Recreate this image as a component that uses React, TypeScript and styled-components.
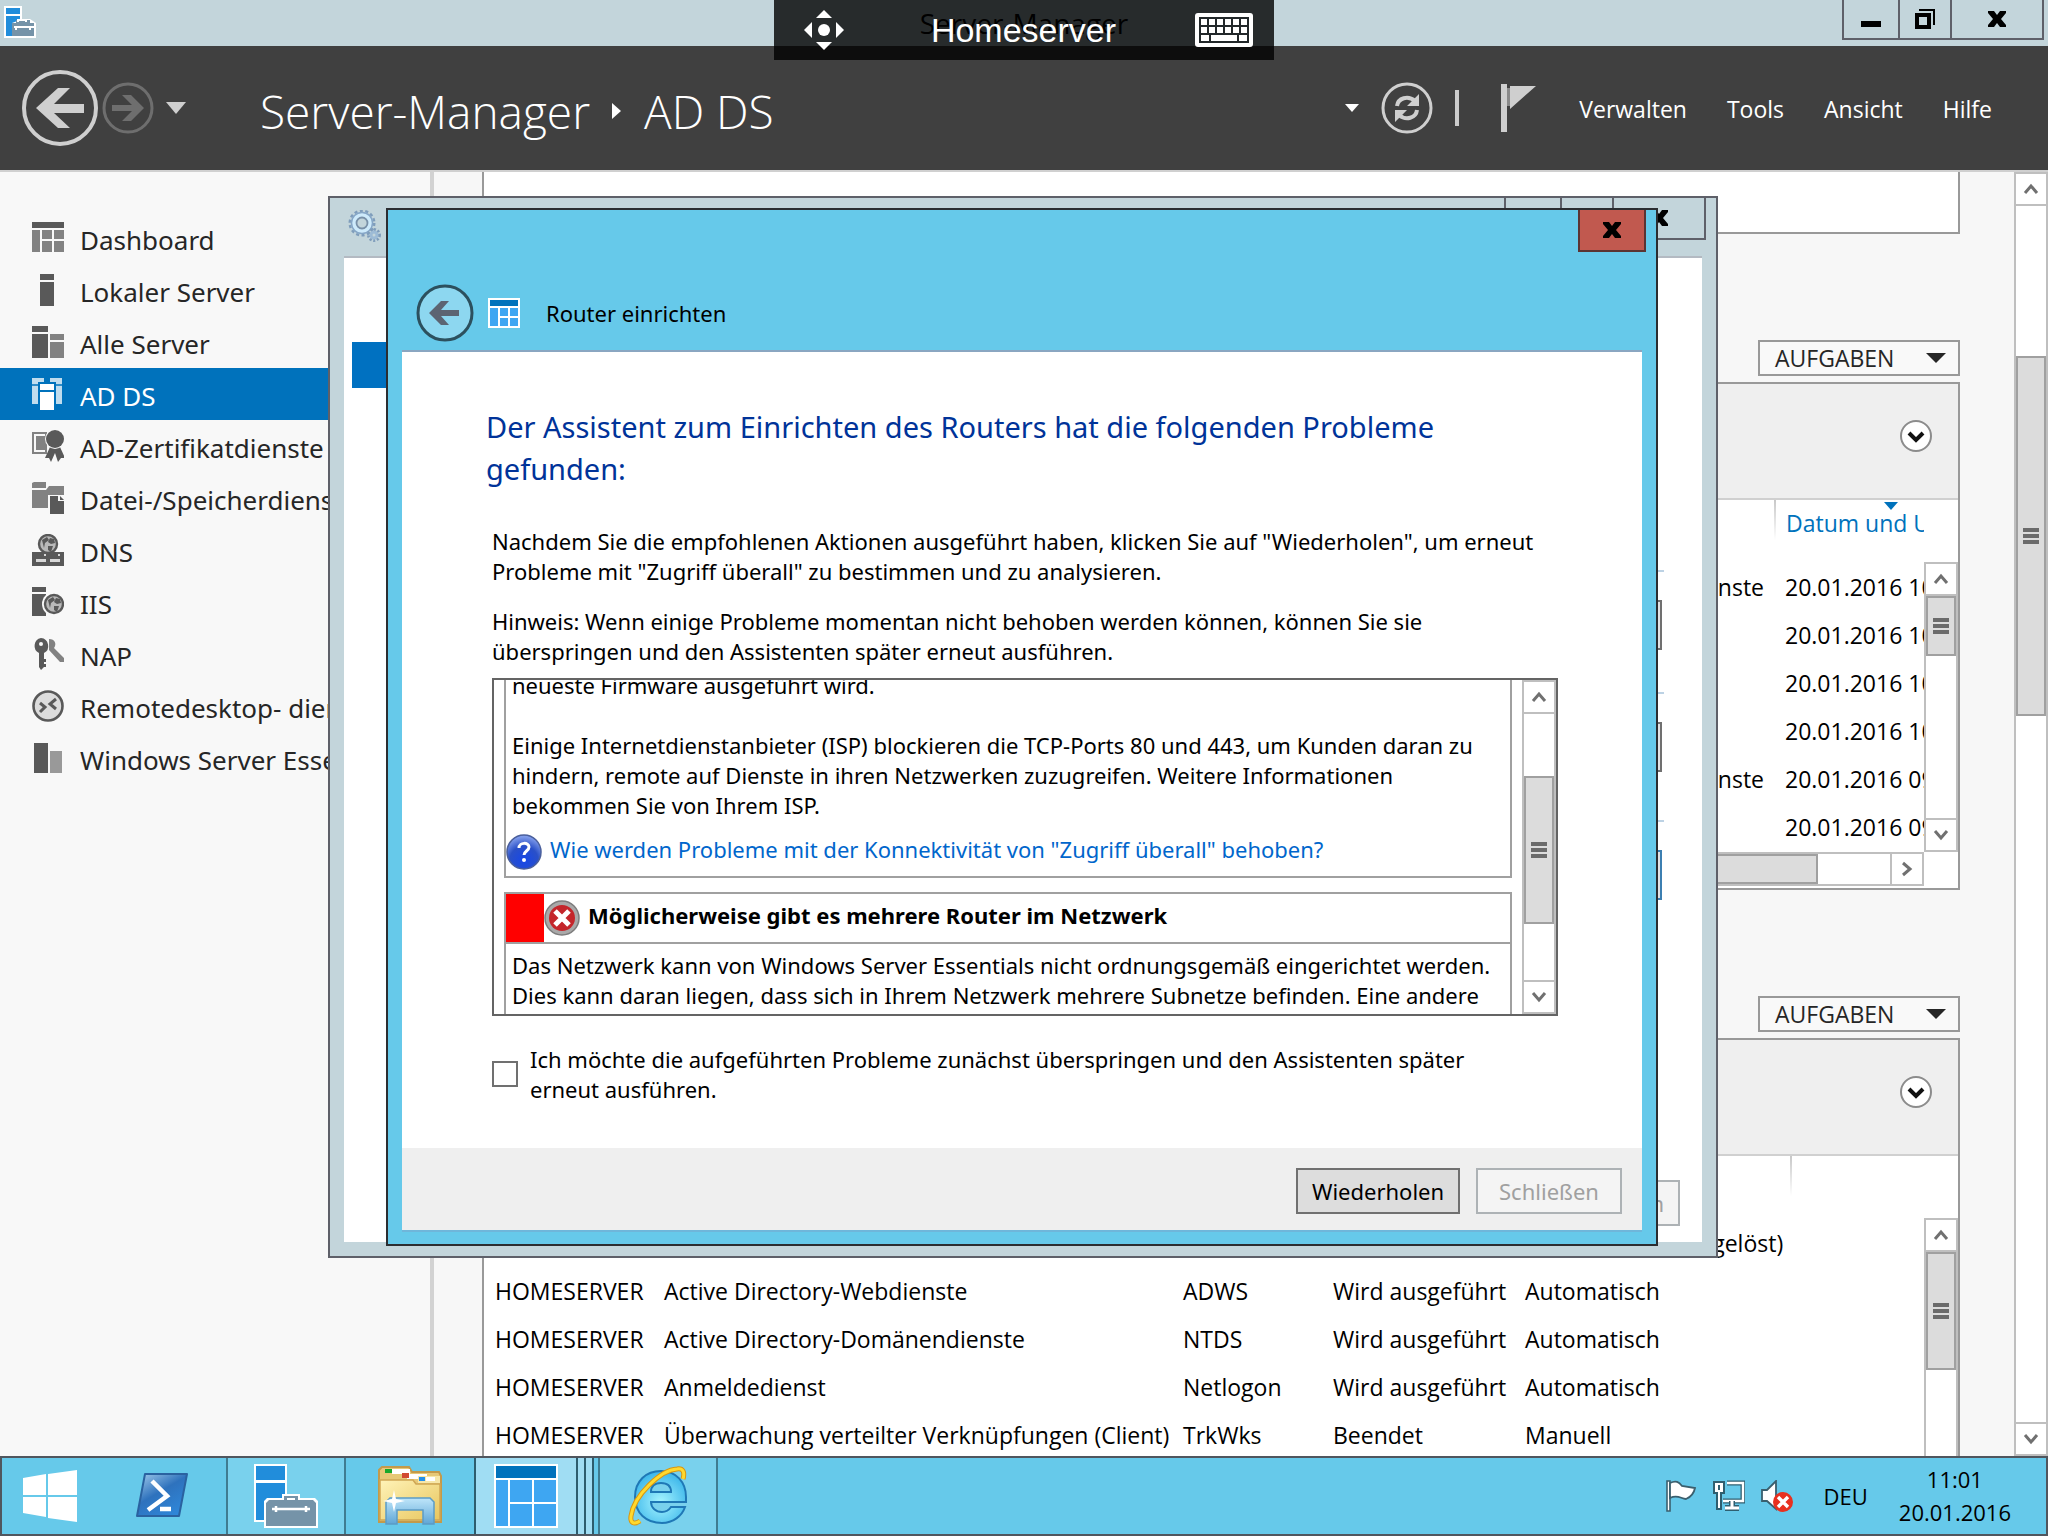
import React from "react";
import styled, { createGlobalStyle, css } from "styled-components";

const ui = '"Open Sans", "Noto Sans", sans-serif';
const wide = '"Noto Sans", "Open Sans", sans-serif';

const color = {
  accent: "#66c9ea",
  inactive: "#c3d5db",
  select: "#0072bc",
  line: "#999999",
  track: "#bfbfbf",
  page: "#f7f7f7",
  thumb: "#dcdcdc",
};

const GlobalStyle = createGlobalStyle`
  *, *::before, *::after { box-sizing: border-box; }
  body { margin: 0; overflow: hidden; font-family: ${ui}; font-size: 22px; line-height: 30px; color: #000; background: #fff; }
  button { font: inherit; color: inherit; padding: 0; border: 0; background: none; border-radius: 0; }
  svg { display: block; flex: none; }
  p, h1, h2, h3, ul { margin: 0; padding: 0; font-weight: 400; }
  a { text-decoration: none; color: inherit; }
`;

/* ---------- desktop ---------- */

const Desktop = styled.div`
  position: relative;
  display: flex;
  flex-direction: column;
  width: 100%;
  height: 100vh;
  overflow: hidden;
`;

const TitleBar = styled.header`
  display: grid;
  grid-template-columns: 1fr auto 1fr;
  height: 46px;
  flex: none;
  padding: 0 4px;
  background: ${color.inactive};
`;

const TitleIcon = styled.span`
  padding-top: 6px;
`;

const TitleText = styled.h1`
  font-size: 28px;
  line-height: 46px;
`;

const CaptionGroup = styled.div<{ $height: number }>`
  display: flex;
  justify-self: end;
  height: ${(p) => p.$height}px;
  border: 2px solid #5e6069;
  border-top: 0;
  border-right: 0;
`;

const CaptionButton = styled.button<{ $width: number }>`
  display: flex;
  align-items: center;
  justify-content: center;
  width: ${(p) => p.$width}px;
  border-right: 2px solid #5e6069;
`;

const ConnectionBar = styled.div`
  position: absolute;
  z-index: 5;
  top: 0;
  left: 50%;
  width: 500px;
  height: 60px;
  margin-left: -250px;
  padding: 0 21px 0 30px;
  display: grid;
  grid-template-columns: 48px 1fr 58px;
  align-items: center;
  background: rgba(0, 0, 0, 0.8);
  color: #fff;
  font-family: "Liberation Sans", Arial, sans-serif;
  font-size: 34px;
  line-height: 40px;
  text-align: center;
`;

const BarButton = styled.button`
  display: flex;
`;

/* ---------- server manager header ---------- */

const Header = styled.div`
  display: flex;
  align-items: center;
  flex: none;
  height: 126px;
  padding: 0 56px 0 22px;
  background: #404040;
  border-bottom: 2px solid #d0d0d0;
  color: #fff;
`;

const History = styled.div`
  display: flex;
  align-items: center;
  gap: 4px;
`;

const RoundButton = styled.button`
  display: flex;
`;

const HistoryMenu = styled.button`
  padding: 0 8px;
`;

const Breadcrumb = styled.nav`
  display: flex;
  align-items: center;
  gap: 22px;
  margin-left: 66px;
  padding-top: 6px;
  font-size: 46px;
  font-weight: 300;
  line-height: 60px;
`;

const Commands = styled.div`
  display: flex;
  align-items: center;
  margin-left: auto;
`;

const Refresh = styled.div`
  display: flex;
  align-items: center;
  gap: 22px;
`;

const CommandRule = styled.span`
  width: 4px;
  height: 36px;
  background: #cccccc;
`;

const FlagButton = styled.button`
  margin: 0 42px;
`;

const MenuBar = styled.nav`
  display: flex;
  gap: 40px;
  padding-top: 2px;
  font-size: 23px;
`;

/* ---------- server manager body ---------- */

const Body = styled.div`
  display: flex;
  flex: 1;
  min-height: 0;
  background: ${color.page};
`;

const Sidebar = styled.nav`
  flex: none;
  width: 434px;
  padding-top: 40px;
  border-right: 4px solid #d2d2d2;
  overflow: hidden;
  background: #f8f8f8;
  font-family: ${wide};
`;

const SideItem = styled.a<{ $active?: boolean }>`
  display: flex;
  align-items: center;
  gap: 16px;
  height: 52px;
  padding-left: 32px;
  font-size: 26px;
  white-space: nowrap;
  color: ${(p) => (p.$active ? "#fff" : "#262626")};
  background: ${(p) => (p.$active ? color.select : "transparent")};
`;

const SideLabel = styled.span`
  padding-top: 3px;
`;

const Content = styled.main`
  flex: 1;
  min-width: 0;
  overflow: hidden;
  padding: 0 54px 0 48px;
  font-size: 23px;
`;

const TopTile = styled.section`
  height: 62px;
  border: 2px solid ${color.line};
  border-top: 0;
  background: #fff;
`;

const TileActions = styled.div`
  display: flex;
  justify-content: flex-end;
  padding: 106px 0 6px;
`;

const TaskButton = styled.button`
  display: flex;
  align-items: center;
  justify-content: space-between;
  width: 202px;
  height: 36px;
  padding: 0 12px 0 15px;
  border: 2px solid ${color.line};
  background: #f9f9f9;
  color: #262626;
`;

const Tile = styled.section`
  padding-bottom: 2px;
  border: 2px solid ${color.line};
  background: #fff;
`;

const TileFilter = styled.div`
  display: flex;
  justify-content: flex-end;
  align-items: center;
  height: 116px;
  padding: 0 26px 10px;
  background: #efefef;
  border-bottom: 2px solid #d0d0d0;
`;

const TileBody = styled.div`
  display: flex;
`;

const TableClip = styled.div`
  flex: 1;
  min-width: 0;
  overflow: hidden;
`;

const TileScroll = styled.div<{ $corner?: boolean }>`
  display: flex;
  flex: none;
  padding: 62px 0 ${(p) => (p.$corner ? 34 : 0)}px;
`;

const Table = styled.table`
  width: 100%;
  table-layout: fixed;
  border-collapse: collapse;
  white-space: nowrap;
`;

const HeadCell = styled.th<{ $rule?: boolean }>`
  height: 64px;
  padding: 8px 0 0 12px;
  font-weight: 400;
  text-align: left;
  vertical-align: top;
  color: ${color.select};
  ${(p) =>
    p.$rule &&
    css`
      background: linear-gradient(#c8c8c8, #fff) no-repeat 0 0 / 2px 40px;
    `}
`;

const SortMark = styled.span`
  display: block;
  height: 8px;
  margin: -6px 0 -2px 98px;
`;

const Cell = styled.td<{ $align?: "left" | "right" }>`
  height: 48px;
  padding: 0 10px 3px 11px;
  text-align: ${(p) => p.$align ?? "left"};
`;

/* ---------- scroll bars ---------- */

const Scroll = styled.div<{ $horizontal?: boolean }>`
  display: flex;
  flex: none;
  flex-direction: ${(p) => (p.$horizontal ? "row" : "column")};
  ${(p) => (p.$horizontal ? "height: 34px;" : "width: 34px;")}
  background: #fff;
  border: solid ${color.track};
  border-width: ${(p) => (p.$horizontal ? "2px 0" : "0 2px")};
`;

const ScrollButton = styled.button`
  display: flex;
  align-items: center;
  justify-content: center;
  flex: none;
  width: 30px;
  height: 34px;
  border: solid ${color.track};
  border-width: 2px 0;
`;

const ScrollButtonSide = styled(ScrollButton)`
  width: 34px;
  height: 30px;
  border-width: 0 2px;
`;

const ScrollGap = styled.span<{ $size?: number }>`
  flex: ${(p) => (p.$size === undefined ? "1" : `0 0 ${p.$size}px`)};
`;

const Thumb = styled.span<{ $size: number }>`
  display: flex;
  align-items: center;
  justify-content: center;
  flex: 0 0 ${(p) => p.$size}px;
  background: ${color.thumb};
  border: 2px solid #a0a0a0;
`;

/* ---------- windows ---------- */

const BackWindow = styled.section`
  position: absolute;
  left: 328px;
  top: 196px;
  width: 1390px;
  height: 1062px;
  display: flex;
  flex-direction: column;
  padding: 0 14px 14px;
  border: 2px solid #5e6069;
  background: ${color.inactive};
  font-family: ${wide};
`;

const BackTitle = styled.header`
  display: flex;
  justify-content: space-between;
  height: 58px;
  flex: none;
  padding-left: 4px;

  > svg {
    margin-top: 12px;
  }
`;

const BackCaption = styled.div`
  margin-right: -4px;
`;

const BackClient = styled.div`
  display: flex;
  flex: 1;
  padding: 84px 22px 16px 8px;
  background: #fff;
  border-top: 2px solid #b3bac2;
`;

const BackNav = styled.div`
  width: 300px;
  height: 46px;
  background: #0071c1;
`;

const BackSteps = styled.div`
  display: flex;
  flex: 1;
  flex-direction: column;
  align-items: flex-end;
  padding-top: 228px;
`;

const Step = styled.div<{ $gap: number }>`
  display: flex;
  justify-content: flex-end;
  width: 400px;
  margin-right: 16px;
  padding: 28px 2px ${(p) => p.$gap}px;
  border-top: 2px solid #bcd2e4;
`;

const StepButton = styled.button<{ $focus?: boolean }>`
  width: 180px;
  height: 50px;
  border: 2px solid ${(p) => (p.$focus ? "#3c7fb1" : "#707070")};
  background: #e3e3e3;
`;

const Dialog = styled.section`
  position: absolute;
  z-index: 2;
  left: 386px;
  top: 208px;
  width: 1272px;
  padding: 0 14px 12px;
  border: 2px solid #2b2d31;
  background: ${color.accent};
  font-family: ${wide};
`;

const DialogBar = styled.header`
  display: flex;
  justify-content: flex-end;
  height: 42px;
  margin-right: -4px;
`;

const CloseButton = styled.button`
  display: flex;
  align-items: center;
  justify-content: center;
  width: 68px;
  border: 2px solid #5b3433;
  border-top: 0;
  background: #c1594f;
`;

const DialogCaption = styled.div`
  display: flex;
  align-items: center;
  gap: 14px;
  padding: 32px 14px 8px;
`;

const DialogTitle = styled.h2`
  font-size: 22px;
  line-height: 30px;
  padding-left: 12px;
`;

const DialogClient = styled.div`
  background: #fff;
  border-top: 2px solid #8aa6c1;
  border-bottom: 2px solid #6fb6da;
`;

const Headline = styled.h3`
  padding: 54px 84px 36px;
  font-size: 29px;
  line-height: 42px;
  color: #003399;
  white-space: nowrap;
`;

const DialogText = styled.div`
  display: flex;
  flex-direction: column;
  gap: 20px;
  padding: 0 84px 12px 90px;
  white-space: nowrap;
`;

const ProblemBox = styled.div`
  display: flex;
  height: 338px;
  margin: 0 84px 0 90px;
  border: 2px solid #646464;
`;

const ProblemList = styled.div`
  flex: 1;
  min-width: 0;
  overflow: hidden;
  padding: 0 10px;
`;

const ScrolledContent = styled.div`
  display: flex;
  flex-direction: column;
  gap: 14px;
  margin-top: -10px;
`;

const Problem = styled.article`
  border: 2px solid #a0a0a0;
  white-space: nowrap;
`;

const OpenProblem = styled(Problem)`
  border-top: 0;
`;

const ProblemHead = styled.div`
  display: flex;
  height: 50px;
  border-bottom: 2px solid #a0a0a0;

  > svg {
    margin: 6px 8px 0 0;
  }
`;

const Severity = styled.span`
  width: 38px;
  background: #ff0000;
`;

const ProblemTitle = styled.strong`
  line-height: 42px;
  font-weight: 700;
`;

const ProblemText = styled.p`
  padding: 0 6px;
`;

const ProblemDetail = styled(ProblemText)`
  padding-top: 6px;
`;

const HelpLink = styled.a`
  display: flex;
  gap: 8px;
  margin-top: 14px;
  padding-bottom: 6px;
  line-height: 30px;
  color: #0066cc;
`;

const SkipRow = styled.div`
  display: flex;
  align-items: center;
  gap: 12px;
  padding: 28px 84px 44px 90px;
  white-space: nowrap;
`;

const CheckBox = styled.input`
  appearance: none;
  flex: none;
  width: 26px;
  height: 26px;
  margin: 0;
  border: 2px solid #707070;
  background: #fff;
`;

const DialogFooter = styled.footer`
  display: flex;
  justify-content: flex-end;
  gap: 16px;
  padding: 20px 20px 16px;
  background: #efefef;
`;

const PushButton = styled.button<{ $width: number }>`
  width: ${(p) => p.$width}px;
  height: 46px;
  border: 2px solid #707070;
  background: #dddddd;

  &:disabled {
    border-color: #adb2b5;
    background: #f4f4f4;
    color: #a0a0a0;
  }
`;

const BackPushButton = styled(PushButton)`
  margin-top: auto;
  padding-right: 14px;
  text-align: right;
`;

/* ---------- task bar ---------- */

const TaskBar = styled.footer`
  display: flex;
  align-items: stretch;
  flex: none;
  gap: 4px;
  height: 80px;
  border: 2px solid #50565e;
  background: ${color.accent};
`;

const TaskItem = styled.button<{ $state?: "open" | "active"; $width?: number }>`
  display: flex;
  align-items: center;
  justify-content: center;
  width: ${(p) => p.$width ?? 120}px;
  ${(p) =>
    p.$state === "open" &&
    css`
      background: #79d1ed;
      border: solid #3f7c91;
      border-width: 0 2px;
    `}
  ${(p) =>
    p.$state === "active" &&
    css`
      justify-content: flex-start;
      padding-left: 18px;
      background: #a0ddf3;
      border: solid #2d5d6e;
      border-width: 0 2px;
    `}
`;

const StackEdge = styled.span`
  align-self: stretch;
  width: 10px;
  margin-left: 18px;
  border: solid #2d5d6e;
  border-width: 0 2px;
`;

const Tray = styled.div`
  display: flex;
  align-items: center;
  gap: 16px;
  margin-left: auto;
  padding-right: 35px;
`;

const Language = styled.button`
  padding: 0 15px;
`;

const Clock = styled.div`
  text-align: center;
  line-height: 33px;
`;

/* ---------- icons ---------- */

const ManagerIcon = () => (
  <svg width="64" height="64" viewBox="0 0 64 64">
    <path d="M0 0h33v58H0z" fill="#fff" />
    <path d="M2 2h29v14H2zM2 19h29v37H2z" fill="#218ddb" />
    <path d="M10 37l3-3h15v-4h18v4h15l3 3v27H10z" fill="#fff" />
    <path d="M30 36v-4h14v4h-3v-2h-8v2zM12 39l3-3h44l3 3v23H12z" fill="#7593a8" />
    <path d="M18 45h38M22 42v6M52 42v6" stroke="#fff" strokeWidth="2.5" fill="none" />
  </svg>
);

const SmallManagerIcon = () => (
  <svg width="32" height="32" viewBox="0 0 32 32">
    <path d="M0 0h18v13h8l6 4v15H0z" fill="#fff" />
    <path d="M2 2h14v6H2zM2 10h14v4l-8 3v13H2z" fill="#218ddb" />
    <path d="M8 17h4v-3h14v3h4v13H8z" fill="#7593a8" />
    <path d="M10 21h20M12 20v4M26 20v4M14 16v-2h8v2" stroke="#fff" strokeWidth="2" fill="none" />
  </svg>
);

const XMark = () => (
  <svg width="18" height="16" viewBox="0 0 18 16">
    <path d="M0 0h6l3 4 3-4h6v2l-5 6 5 6v2h-6l-3-4-3 4H0v-2l5-6-5-6z" fill="#000" />
  </svg>
);

const MinMark = () => (
  <svg width="20" height="24" viewBox="0 0 20 24">
    <path d="M0 14h20v6H0z" />
  </svg>
);

const RestoreMark = () => (
  <svg width="20" height="20" viewBox="0 0 20 20">
    <path d="M4 0h16v16h-2V2H4zM0 4h16v16H0zM4 8v8h8V8z" fillRule="evenodd" />
  </svg>
);

const Caption = ({ height }: { height: number }) => (
  <CaptionGroup $height={height}>
    <CaptionButton $width={56} aria-label="Minimieren"><MinMark /></CaptionButton>
    <CaptionButton $width={52} aria-label="Wiederherstellen"><RestoreMark /></CaptionButton>
    <CaptionButton $width={92} aria-label="Fenster schließen"><XMark /></CaptionButton>
  </CaptionGroup>
);

const MoveIcon = () => (
  <svg width="40" height="40" viewBox="0 0 40 40" fill="#fff">
    <circle cx="20" cy="20" r="6" />
    <path d="M20 0l8 8H12zM20 40l-8-8h16zM0 20l8-8v16zM40 20l-8 8V12z" />
  </svg>
);

const KeyboardIcon = () => (
  <svg width="58" height="34" viewBox="0 0 58 34">
    <rect width="58" height="34" rx="3" fill="#fff" />
    <path d="M4 4h50v26H4z" fill="#22282a" />
    <path
      d="M6 6h6v6H6zM14 6h6v6h-6zM22 6h6v6h-6zM30 6h6v6h-6zM38 6h6v6h-6zM46 6h6v6h-6zM6 14h6v6H6zM14 14h6v6h-6zM22 14h6v6h-6zM30 14h6v6h-6zM38 14h6v6h-6zM46 14h6v6h-6zM6 22h8v6H6zM16 22h26v6H16zM44 22h8v6h-8z"
      fill="#fff"
    />
  </svg>
);

const BackIcon = () => (
  <svg width="76" height="76" viewBox="0 0 76 76">
    <circle cx="38" cy="38" r="36" fill="none" stroke="#cfcfcf" strokeWidth="4" />
    <path d="M14 38L36 18h12L32 34h30v9H32l16 15H36z" fill="#cfcfcf" />
  </svg>
);

const ForwardIcon = () => (
  <svg width="52" height="52" viewBox="0 0 52 52">
    <circle cx="26" cy="26" r="24" fill="none" stroke="#6e6e6e" strokeWidth="3" />
    <path d="M42 26L29 39h-9l10-10H10v-6h20L20 13h9z" fill="#6e6e6e" />
  </svg>
);

const Triangle = ({ w, h, fill }: { w: number; h: number; fill: string }) => (
  <svg width={w} height={h} viewBox="0 0 20 10" preserveAspectRatio="none">
    <path d="M0 0h20L10 10z" fill={fill} />
  </svg>
);

const CrumbArrow = () => (
  <svg width="10" height="16" viewBox="0 0 10 16">
    <path d="M0 0l9 8-9 8z" fill="#fff" />
  </svg>
);

const RefreshIcon = () => (
  <svg width="52" height="52" viewBox="0 0 52 52" fill="none" stroke="#cfcfcf">
    <circle cx="26" cy="26" r="24" strokeWidth="3" />
    <path d="M16 24c1-8 11-11 18-5M36 28c-1 8-11 11-18 5" strokeWidth="4" />
    <path d="M38 12v12H26zM14 40V28h12z" fill="#cfcfcf" stroke="none" />
  </svg>
);

const FlagIcon = () => (
  <svg width="36" height="48" viewBox="0 0 36 48">
    <path d="M0 0h6v48H0zM9 2h26L9 25z" fill="#cfcfcf" />
    <path d="M6 4h3v18H6z" fill="#8a8a8a" />
  </svg>
);

const ChevronCircle = () => (
  <svg width="32" height="32" viewBox="0 0 32 32">
    <circle cx="16" cy="16" r="15" fill="#fff" stroke="#8c8c8c" strokeWidth="2" />
    <path d="M9 13l7 7 7-7" fill="none" stroke="#111" strokeWidth="4" />
  </svg>
);

const Chevron = ({ turn }: { turn: number }) => (
  <svg width="16" height="16" viewBox="0 0 16 16">
    <path d="M2 12l6-7 6 7" fill="none" stroke="#707070" strokeWidth="3" transform={`rotate(${turn} 8 8)`} />
  </svg>
);

const Grip = () => (
  <svg width="16" height="16" viewBox="0 0 16 16">
    <path d="M0 0h16v4H0zM0 6h16v4H0zM0 12h16v4H0z" fill="#6b6b6b" />
  </svg>
);

const Dark = "#595959";
const Mid = "#828282";

const Globe = ({ x, y, r }: { x: number; y: number; r: number }) => (
  <g transform={`translate(${x} ${y}) scale(${r / 10})`}>
    <circle r="9" fill="#b9b9b9" stroke={Dark} strokeWidth="2.4" />
    <path d="M-6-4l5-3 2 3-4 3-1 5zM2-6l4 1 1 4-4 1-3-2zM0 2l5 0-2 6-3-2z" fill={Dark} />
  </g>
);

const sideIcons: Record<string, React.ReactNode> = {
  dashboard: (
    <>
      <path d="M0 0h32v6H0z" fill={Dark} />
      <path d="M0 8h8v22H0zM10 8h10v9H10zM22 8h10v9H22zM10 19h10v11H10zM22 19h10v11H22z" fill={Mid} />
    </>
  ),
  local: <path d="M8 0h14v6H8zM8 8h14v24H8z" fill={Dark} />,
  all: (
    <>
      <path d="M0 0h16v6H0zM0 8h16v24H0z" fill={Dark} />
      <path d="M18 8h14v6H18zM18 16h14v16H18z" fill={Mid} />
    </>
  ),
  adds: (
    <>
      <path d="M0 0h12v6H6v20H0zM18 0h12v26h-6V6h-6z" fill="#bfdcee" />
      <path d="M0 7h7M23 7h7" stroke={color.select} strokeWidth="1.5" />
      <path d="M6 4h18v28H6z" fill={color.select} />
      <path d="M8 6h14v6H8zM8 14h14v18H8z" fill="#fff" />
    </>
  ),
  cert: (
    <>
      <path d="M1 3h13v20H1z" fill="none" stroke={Mid} strokeWidth="2" />
      <path d="M4 6h9v14H4z" fill={Mid} />
      <path d="M18 17l-5 11 4 0 2 4 4-9 3 9 3-4h4l-5-11z" fill={Dark} />
      <circle cx="23" cy="9" r="10" fill="#f8f8f8" />
      <circle cx="23" cy="9" r="9" fill={Dark} />
    </>
  ),
  files: (
    <>
      <path d="M0 1l2-1h12v6H0zM0 8h14l3-4h15v9H16v13H0z" fill={Mid} />
      <path d="M18 14h8v5h6v13H18zM28 14l4 4h-4z" fill={Dark} />
    </>
  ),
  dns: (
    <>
      <Globe x={16} y={10} r={10} />
      <path d="M0 18h32v14H0z" fill={Dark} />
      <path d="M4 25h10v3H4zM18 25h10v3H18zM12 20h2v2h-2zM26 20h2v2h-2z" fill="#d8d8d8" />
    </>
  ),
  iis: (
    <>
      <path d="M0 1h14v5H0zM0 8h14v22H0z" fill={Dark} />
      <circle cx="22" cy="18" r="12" fill="#f8f8f8" />
      <Globe x={22} y={18} r={10} />
    </>
  ),
  nap: (
    <>
      <path d="M17 1c6 0 8 5 5 9l10 10v4h-4L17 12" fill={Mid} />
      <path d="M9 0a8 8 0 0 1 3 15v14l-3 3-2-3V15A8 8 0 0 1 9 0z" fill={Dark} />
      <path d="M12 21h2v3h-2zM12 26h2v3h-2z" fill={Dark} />
      <circle cx="9" cy="6" r="2" fill="#f8f8f8" />
    </>
  ),
  remote: (
    <>
      <circle cx="16" cy="16" r="14.5" fill="#dcdcdc" stroke={Dark} strokeWidth="2.6" />
      <path d="M8 13l5 4-5 5M24 9l-6 5 6 5" fill="none" stroke={Dark} strokeWidth="3" />
    </>
  ),
  essentials: (
    <>
      <path d="M2 1h14v30H2z" fill={Dark} />
      <path d="M18 9h12v22H18z" fill="#999" />
    </>
  ),
};

const SideIcon = ({ name }: { name: string }) => (
  <svg width="32" height="32" viewBox="0 0 32 32">{sideIcons[name]}</svg>
);

const GearsIcon = () => (
  <svg width="34" height="34" viewBox="0 0 34 34" fill="none">
    <circle cx="14" cy="13" r="12" stroke="#7f9dbb" strokeWidth="3" strokeDasharray="3 2.4" />
    <circle cx="14" cy="13" r="8.5" stroke="#cdeafb" strokeWidth="5" />
    <circle cx="14" cy="13" r="10.5" stroke="#86a6c6" strokeWidth="1.5" />
    <circle cx="14" cy="13" r="5.5" stroke="#7890a8" strokeWidth="1.8" />
    <circle cx="26" cy="25" r="5.5" stroke="#7f9dbb" strokeWidth="3" strokeDasharray="2 1.6" />
    <circle cx="26" cy="25" r="3" stroke="#9dbbd6" strokeWidth="3" />
  </svg>
);

const DialogBackIcon = () => (
  <svg width="58" height="58" viewBox="0 0 58 58">
    <circle cx="29" cy="29" r="27" fill="#8dd7f0" stroke="#2c505e" strokeWidth="3" />
    <path d="M13 29L25 17h8l-8 9h18v6H25l8 9h-8z" fill="#5c6472" />
  </svg>
);

const GridIcon = () => (
  <svg width="64" height="64" viewBox="0 0 64 64">
    <path d="M0 0h64v64H0z" fill="#fff" />
    <path d="M2 2h60v12H2z" fill="#0072bc" />
    <path d="M2 16h12v46H2zM16 16h22v22H16zM40 16h22v22H40zM16 40h22v22H16zM40 40h22v22H40z" fill="#3ea6f2" />
  </svg>
);

const SmallGridIcon = () => (
  <svg width="32" height="30" viewBox="0 0 32 30">
    <path d="M0 0h32v30H0z" fill="#fff" />
    <path d="M2 2h28v6H2z" fill="#0072bc" />
    <path d="M2 10h8v18H2zM12 10h8v8h-8zM22 10h8v8h-8zM12 20h8v8h-8zM22 20h8v8h-8z" fill="#3ea6f2" />
  </svg>
);

const HelpIcon = () => (
  <svg width="36" height="36" viewBox="0 0 36 36">
    <defs>
      <radialGradient id="help" cx="0.5" cy="0.75" r="0.7">
        <stop offset="0" stopColor="#1747e8" />
        <stop offset="0.6" stopColor="#2a50c8" />
        <stop offset="1" stopColor="#7f9bea" />
      </radialGradient>
    </defs>
    <circle cx="18" cy="18" r="17" fill="url(#help)" stroke="#4a5f9c" strokeWidth="1.5" />
    <path d="M13 14c0-6 10-6 10-1 0 4-5 4-5 8" fill="none" stroke="#fff" strokeWidth="3" />
    <circle cx="18" cy="26" r="2" fill="#fff" />
  </svg>
);

const ErrorIcon = () => (
  <svg width="36" height="36" viewBox="0 0 36 36">
    <circle cx="18" cy="18" r="17" fill="#a9a9a9" stroke="#7d7d7d" strokeWidth="1.5" />
    <circle cx="18" cy="18" r="13" fill="#c4262b" />
    <path d="M11 11l14 14M25 11L11 25" stroke="#fff" strokeWidth="5" />
  </svg>
);

const StartIcon = () => (
  <svg width="54" height="52" viewBox="0 0 54 52" fill="#fff">
    <path d="M0 8l23-4v21H0zM25 4l29-4v25H25zM0 27h23v20L0 43zM25 27h29v25l-29-4z" />
  </svg>
);

const PowerShellIcon = () => (
  <svg width="54" height="48" viewBox="0 0 54 48">
    <defs>
      <linearGradient id="ps" x1="0" y1="0" x2="0.7" y2="1">
        <stop offset="0" stopColor="#a5cdec" />
        <stop offset="0.5" stopColor="#2e72bd" />
        <stop offset="1" stopColor="#2f86d8" />
      </linearGradient>
    </defs>
    <path d="M10 2h42l-8 42H2z" fill="url(#ps)" stroke="#2a62a0" strokeWidth="2" strokeLinejoin="round" />
    <path d="M17 9l15 15-19 14M25 37h11" fill="none" stroke="#fff" strokeWidth="4.5" />
  </svg>
);

const ExplorerIcon = () => (
  <svg width="66" height="60" viewBox="0 0 66 60">
    <defs>
      <linearGradient id="folder" x1="0" y1="0" x2="1" y2="1">
        <stop offset="0" stopColor="#fff3b8" />
        <stop offset="1" stopColor="#e8c65e" />
      </linearGradient>
      <linearGradient id="stand" x1="0" y1="0" x2="0" y2="1">
        <stop offset="0" stopColor="#bfe6fa" />
        <stop offset="1" stopColor="#5fa6d6" />
      </linearGradient>
    </defs>
    <path d="M2 56V4l3-3h27l3 5h27l2 4v46z" fill="#e6c877" stroke="#c49a4a" strokeWidth="2" />
    <path d="M15 3h18v5H15zM30 8h20v5H30z" fill="#fff" />
    <path d="M8 3h7v4H8z" fill="#17a82b" />
    <path d="M25 7h7v5h-7z" fill="#d14a32" />
    <path d="M3 14h33l3 4h24v36H3z" fill="url(#folder)" stroke="#cfa654" strokeWidth="1.5" />
    <path d="M41 10h22v7H41z" fill="#f7e7a8" />
    <path d="M42 11h6v4h-6z" fill="#2390ea" />
    <path d="M49 11h9v4h-9z" fill="#fff" />
    <path d="M9 58V36l4-4h40l4 4v22H46V44H20v14z" fill="url(#stand)" stroke="#5b9cc6" strokeWidth="1.5" />
    <path d="M17 24l2 9 9 2-9 2-2 9-2-9-9-2 9-2z" fill="#fff" />
  </svg>
);

const ExplorerEIcon = () => (
  <svg width="60" height="60" viewBox="0 0 60 60">
    <defs>
      <radialGradient id="ie" cx="0.5" cy="0.6" r="0.6">
        <stop offset="0" stopColor="#a6f4ff" />
        <stop offset="1" stopColor="#3bb6ea" />
      </radialGradient>
    </defs>
    <path
      d="M33 5c15 0 25 11 25 26v5H23c0 6 5 10 11 10 4 0 7-2 9-5h14c-3 9-12 16-23 16C18 57 7 47 7 31 7 15 18 5 33 5zM23 26h20c0-6-4-9-10-9s-10 3-10 9z"
      fill="url(#ie)"
      stroke="#1f78b6"
      strokeWidth="2"
      fillRule="evenodd"
    />
    <path
      d="M55 13c2-7 0-11-6-10C33 4 6 29 3 50c-1 7 3 9 9 5"
      fill="none"
      stroke="#d9960f"
      strokeWidth="5"
    />
    <path d="M55 13c2-7 0-11-6-10C33 4 6 29 3 50c-1 7 3 9 9 5" fill="none" stroke="#ffd92e" strokeWidth="3" />
  </svg>
);

const TrayFlag = () => (
  <svg width="32" height="32" viewBox="0 0 32 32">
    <path d="M2 1h3v30H2z" fill="#fff" stroke="#3a5f6e" strokeWidth="1.6" />
    <path d="M5 3c6-3 9-1 12 3l13 2c-1 5-4 9-9 11-5 0-8-5-16-1z" fill="#fff" stroke="#3a5f6e" strokeWidth="1.8" />
  </svg>
);

const TrayNetwork = () => (
  <svg width="32" height="32" viewBox="0 0 32 32" fill="none">
    <path d="M14 3h16v18H10" stroke="#2f5f70" strokeWidth="5" />
    <path d="M14 3h16v18H10" stroke="#fff" strokeWidth="2.4" />
    <path d="M19 21v7M12 28h14" stroke="#2f5f70" strokeWidth="6" />
    <path d="M19 21v7M12 28h14" stroke="#fff" strokeWidth="3" />
    <path d="M1 2h10v11H8v16H4V13H1z" fill="#fff" stroke="#2f5f70" strokeWidth="2" />
    <path d="M5 5h2v5H5z" fill="#2f5f70" />
  </svg>
);

const TraySound = () => (
  <svg width="32" height="32" viewBox="0 0 32 32">
    <path d="M1 10h5l9-9v28l-9-8H1z" fill="#fff" stroke="#3a5f6e" strokeWidth="1.8" />
    <circle cx="22" cy="22" r="10" fill="#e8301f" />
    <path d="M17 17l10 10M27 17L17 27" stroke="#fff" strokeWidth="3.4" />
  </svg>
);

/* ---------- composed parts ---------- */

interface ScrollBarProps {
  before: number;
  thumb: number;
  closed?: boolean;
}

const ScrollBar = ({ before, thumb, closed = true }: ScrollBarProps) => (
  <Scroll>
    <ScrollButton aria-label="Nach oben"><Chevron turn={0} /></ScrollButton>
    <ScrollGap $size={before} />
    <Thumb $size={thumb}><Grip /></Thumb>
    <ScrollGap />
    {closed && <ScrollButton aria-label="Nach unten"><Chevron turn={180} /></ScrollButton>}
  </Scroll>
);

const HorizontalScrollBar = () => (
  <Scroll $horizontal>
    <ScrollButtonSide aria-label="Nach links"><Chevron turn={-90} /></ScrollButtonSide>
    <Thumb $size={1300} />
    <ScrollGap />
    <ScrollButtonSide aria-label="Nach rechts"><Chevron turn={90} /></ScrollButtonSide>
  </Scroll>
);

const TasksMenu = () => (
  <TileActions>
    <TaskButton>
      AUFGABEN
      <Triangle w={20} h={10} fill="#262626" />
    </TaskButton>
  </TileActions>
);

const sideItems = [
  ["dashboard", "Dashboard"],
  ["local", "Lokaler Server"],
  ["all", "Alle Server"],
  ["adds", "AD DS"],
  ["cert", "AD-Zertifikatdienste"],
  ["files", "Datei-/Speicherdienste"],
  ["dns", "DNS"],
  ["iis", "IIS"],
  ["nap", "NAP"],
  ["remote", "Remotedesktop- dienste"],
  ["essentials", "Windows Server Essentials"],
];

const events = [
  ["Webdienste", "20.01.2016 10:58"],
  ["", "20.01.2016 10:57"],
  ["", "20.01.2016 10:56"],
  ["", "20.01.2016 10:55"],
  ["Webdienste", "20.01.2016 09:48"],
  ["", "20.01.2016 09:47"],
];

const services = [
  ["", "", "", "", "Automatisch (Ausgelöst)"],
  ["HOMESERVER", "Active Directory-Webdienste", "ADWS", "Wird ausgeführt", "Automatisch"],
  ["HOMESERVER", "Active Directory-Domänendienste", "NTDS", "Wird ausgeführt", "Automatisch"],
  ["HOMESERVER", "Anmeldedienst", "Netlogon", "Wird ausgeführt", "Automatisch"],
  ["HOMESERVER", "Überwachung verteilter Verknüpfungen (Client)", "TrkWks", "Beendet", "Manuell"],
];

export default function App() {
  return (
    <Desktop>
      <GlobalStyle />
      <TitleBar>
        <TitleIcon><SmallManagerIcon /></TitleIcon>
        <TitleText>Server-Manager</TitleText>
        <Caption height={40} />
      </TitleBar>

      <Header>
        <History>
          <RoundButton aria-label="Zurück"><BackIcon /></RoundButton>
          <RoundButton aria-label="Vorwärts"><ForwardIcon /></RoundButton>
          <HistoryMenu aria-label="Verlauf"><Triangle w={20} h={12} fill="#cfcfcf" /></HistoryMenu>
        </History>
        <Breadcrumb>
          <a href="#manager">Server-Manager</a>
          <CrumbArrow />
          <a href="#adds">AD DS</a>
        </Breadcrumb>
        <Commands>
          <Refresh>
            <Triangle w={14} h={8} fill="#fff" />
            <RoundButton aria-label="Aktualisieren"><RefreshIcon /></RoundButton>
            <CommandRule />
          </Refresh>
          <FlagButton aria-label="Benachrichtigungen"><FlagIcon /></FlagButton>
          <MenuBar>
            <a href="#verwalten">Verwalten</a>
            <a href="#tools">Tools</a>
            <a href="#ansicht">Ansicht</a>
            <a href="#hilfe">Hilfe</a>
          </MenuBar>
        </Commands>
      </Header>

      <Body>
        <Sidebar>
          {sideItems.map(([icon, label]) => (
            <SideItem key={icon} href={`#${icon}`} $active={icon === "adds"}>
              <SideIcon name={icon} />
              <SideLabel>{label}</SideLabel>
            </SideItem>
          ))}
        </Sidebar>

        <Content>
          <TopTile />

          <TasksMenu />
          <Tile>
            <TileFilter>
              <button aria-label="Erweitern"><ChevronCircle /></button>
            </TileFilter>
            <TileBody>
              <TableClip>
                <Table>
                  <colgroup>
                    <col />
                    <col width="150" />
                  </colgroup>
                  <thead>
                    <tr>
                      <HeadCell />
                      <HeadCell $rule>
                        <SortMark><Triangle w={14} h={8} fill={color.select} /></SortMark>
                        Datum und Uhrzeit
                      </HeadCell>
                    </tr>
                  </thead>
                  <tbody>
                    {events.map(([source, date]) => (
                      <tr key={date}>
                        <Cell $align="right">{source}</Cell>
                        <Cell>{date}</Cell>
                      </tr>
                    ))}
                  </tbody>
                </Table>
                <HorizontalScrollBar />
              </TableClip>
              <TileScroll $corner>
                <ScrollBar before={0} thumb={60} />
              </TileScroll>
            </TileBody>
          </Tile>

          <TasksMenu />
          <Tile>
            <TileFilter>
              <button aria-label="Erweitern"><ChevronCircle /></button>
            </TileFilter>
            <TileBody>
              <TableClip>
                <Table>
                  <colgroup>
                    <col width="169" />
                    <col width="519" />
                    <col width="150" />
                    <col width="192" />
                    <col width="276" />
                    <col />
                  </colgroup>
                  <thead>
                    <tr>
                      <HeadCell />
                      <HeadCell />
                      <HeadCell />
                      <HeadCell />
                      <HeadCell />
                      <HeadCell $rule />
                    </tr>
                  </thead>
                  <tbody>
                    {services.map((row) => (
                      <tr key={row[1]}>
                        {row.map((value, i) => (
                          <Cell key={i}>{value}</Cell>
                        ))}
                      </tr>
                    ))}
                  </tbody>
                </Table>
              </TableClip>
              <TileScroll>
                <ScrollBar before={0} thumb={118} closed={false} />
              </TileScroll>
            </TileBody>
          </Tile>
        </Content>

        <ScrollBar before={150} thumb={360} />
      </Body>

      <BackWindow aria-label="Einrichtung">
        <BackTitle>
          <GearsIcon />
          <BackCaption><Caption height={42} /></BackCaption>
        </BackTitle>
        <BackClient>
          <BackNav />
          <BackSteps>
            <Step $gap={42}><StepButton aria-label="Schritt 1" /></Step>
            <Step $gap={48}><StepButton aria-label="Schritt 2" /></Step>
            <Step $gap={42}><StepButton $focus aria-label="Schritt 3" /></Step>
            <BackPushButton $width={164} disabled>Fertigstellen</BackPushButton>
          </BackSteps>
        </BackClient>
      </BackWindow>

      <Dialog role="dialog" aria-labelledby="dialog-title">
        <DialogBar>
          <CloseButton aria-label="Dialog schließen"><XMark /></CloseButton>
        </DialogBar>
        <DialogCaption>
          <RoundButton aria-label="Zurück im Assistenten"><DialogBackIcon /></RoundButton>
          <SmallGridIcon />
          <DialogTitle id="dialog-title">Router einrichten</DialogTitle>
        </DialogCaption>
        <DialogClient>
          <Headline>
            Der Assistent zum Einrichten des Routers hat die folgenden Probleme
            <br />
            gefunden:
          </Headline>
          <DialogText>
            <p>
              Nachdem Sie die empfohlenen Aktionen ausgeführt haben, klicken Sie auf "Wiederholen", um erneut
              <br />
              Probleme mit "Zugriff überall" zu bestimmen und zu analysieren.
            </p>
            <p>
              Hinweis: Wenn einige Probleme momentan nicht behoben werden können, können Sie sie
              <br />
              überspringen und den Assistenten später erneut ausführen.
            </p>
          </DialogText>
          <ProblemBox>
            <ProblemList>
              <ScrolledContent>
                <OpenProblem>
                  <ProblemText>
                    neueste Firmware ausgeführt wird.
                    <br />
                    <br />
                    Einige Internetdienstanbieter (ISP) blockieren die TCP-Ports 80 und 443, um Kunden daran zu
                    <br />
                    hindern, remote auf Dienste in ihren Netzwerken zuzugreifen. Weitere Informationen
                    <br />
                    bekommen Sie von Ihrem ISP.
                  </ProblemText>
                  <HelpLink href="#hilfe-konnektivitaet">
                    <HelpIcon />
                    Wie werden Probleme mit der Konnektivität von "Zugriff überall" behoben?
                  </HelpLink>
                </OpenProblem>
                <Problem>
                  <ProblemHead>
                    <Severity />
                    <ErrorIcon />
                    <ProblemTitle>Möglicherweise gibt es mehrere Router im Netzwerk</ProblemTitle>
                  </ProblemHead>
                  <ProblemDetail>
                    Das Netzwerk kann von Windows Server Essentials nicht ordnungsgemäß eingerichtet werden.
                    <br />
                    Dies kann daran liegen, dass sich in Ihrem Netzwerk mehrere Subnetze befinden. Eine andere
                    <br />
                    <br />
                  </ProblemDetail>
                </Problem>
              </ScrolledContent>
            </ProblemList>
            <ScrollBar before={62} thumb={148} />
          </ProblemBox>
          <SkipRow>
            <CheckBox type="checkbox" id="skip" />
            <label htmlFor="skip">
              Ich möchte die aufgeführten Probleme zunächst überspringen und den Assistenten später
              <br />
              erneut ausführen.
            </label>
          </SkipRow>
          <DialogFooter>
            <PushButton $width={164}>Wiederholen</PushButton>
            <PushButton $width={146} disabled>Schließen</PushButton>
          </DialogFooter>
        </DialogClient>
      </Dialog>

      <TaskBar>
        <TaskItem $width={96} aria-label="Start"><StartIcon /></TaskItem>
        <TaskItem aria-label="PowerShell"><PowerShellIcon /></TaskItem>
        <TaskItem $state="open" aria-label="Server-Manager"><ManagerIcon /></TaskItem>
        <TaskItem aria-label="Explorer"><ExplorerIcon /></TaskItem>
        <TaskItem $state="active" aria-label="Dashboard">
          <GridIcon />
          <StackEdge />
        </TaskItem>
        <TaskItem $state="open" aria-label="Internet Explorer"><ExplorerEIcon /></TaskItem>
        <Tray>
          <TrayFlag />
          <TrayNetwork />
          <TraySound />
          <Language>DEU</Language>
          <Clock>
            11:01
            <br />
            20.01.2016
          </Clock>
        </Tray>
      </TaskBar>

      <ConnectionBar>
        <BarButton aria-label="Verschieben"><MoveIcon /></BarButton>
        <span>Homeserver</span>
        <BarButton aria-label="Tastatur"><KeyboardIcon /></BarButton>
      </ConnectionBar>
    </Desktop>
  );
}
